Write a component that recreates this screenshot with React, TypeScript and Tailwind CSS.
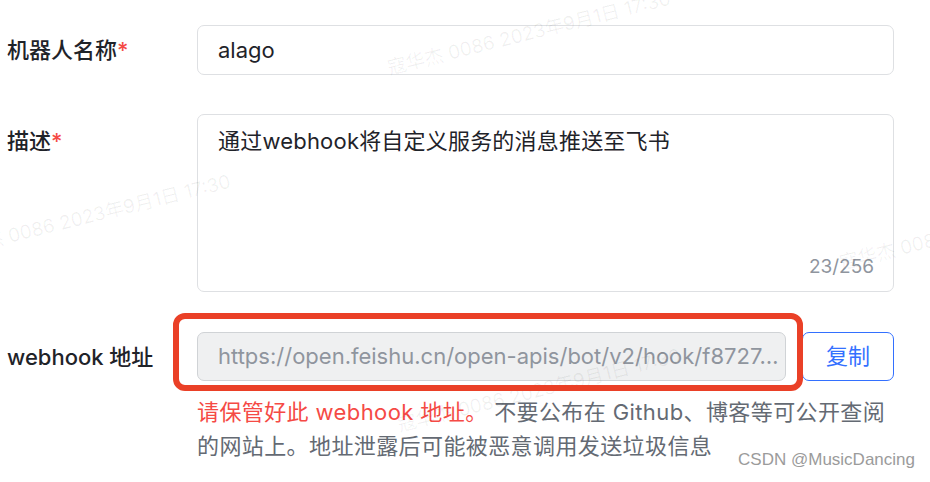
import React from "react";

const marks = [
  { left: 388, top: 55, text: "寇华杰 0086 2023年9月1日 17:30" },
  { left: -52, top: 238, text: "寇华杰 0086 2023年9月1日 17:30" },
  { left: 840, top: 250, text: "寇华杰 0086 2023年9月1日 17:30" },
  { left: 398, top: 412, text: "寇华杰 0086 2023年9月1日 17:30" },
];

function Label({ text, required }: { text: string; required?: boolean }) {
  return (
    <div className="w-[197px] shrink-0 pl-[7px] text-[22px] leading-[32px] font-medium text-[#1f2329]">
      {text}
      {required && <span className="text-[#f54a45]">*</span>}
    </div>
  );
}

export default function App() {
  return (
    <div
      className="relative w-[930px] h-[482px] overflow-hidden bg-white"
      style={{ fontFamily: 'Inter, "Noto Sans CJK SC", sans-serif' }}
    >
      <div className="flex flex-col pt-[25px]">
        {/* 机器人名称 */}
        <div className="flex items-center">
          <Label text="机器人名称" required />
          <div className="w-[697px] h-[50px] flex items-center px-[20px] border border-[#dee0e3] rounded-[7px] text-[22px] text-[#1f2329]">
            alago
          </div>
        </div>

        {/* 描述 */}
        <div className="flex items-start mt-[39px]">
          <div className="pt-[11px]">
            <Label text="描述" required />
          </div>
          <div className="relative w-[697px] h-[178px] border border-[#dee0e3] rounded-[7px] px-[20px] pt-[10px] text-[22px] leading-[32px] tracking-[0.2px] text-[#1f2329]">
            通过webhook将自定义服务的消息推送至飞书
            <span className="absolute right-[19px] bottom-[12px] text-[19px] leading-[24px] tracking-normal text-[#8f959e]">23/256</span>
          </div>
        </div>

        {/* webhook 地址 */}
        <div className="flex items-center mt-[40px]">
          <Label text="webhook 地址" />
          <div className="relative">
            <div className="absolute -left-[24px] -top-[19px] -right-[17px] -bottom-[10px] border-[6px] border-[#ea4027] rounded-[12px] z-10" />
            <div className="w-[589px] h-[49px] flex items-center px-[20px] bg-[#eff0f1] border border-[#d0d3d6] rounded-[7px] text-[22px] text-[#8f959e] whitespace-nowrap overflow-hidden">
              https://open.feishu.cn/open-apis/bot/v2/hook/f8727…
            </div>
          </div>
          <button className="ml-[16px] w-[92px] h-[49px] border border-[#3370ff] rounded-[7px] text-[22px] text-[#3370ff] bg-white">
            复制
          </button>
        </div>

        <div className="pl-[197px] mt-[14px] text-[22px] leading-[34px] tracking-[0.4px] text-[#646a73] whitespace-nowrap">
          <span className="text-[#f54a45]">请保管好此 webhook 地址。</span> 不要公布在 Github、博客等可公开查阅
          <br />
          的网站上。地址泄露后可能被恶意调用发送垃圾信息
        </div>
      </div>

      {/* watermark */}
      {marks.map((m, i) => (
        <div
          key={i}
          className="absolute whitespace-nowrap text-[19px] text-black/[0.06] origin-left -rotate-[14deg] pointer-events-none"
          style={{ left: m.left, top: m.top }}
        >
          {m.text}
        </div>
      ))}

      <div
        className="absolute right-[15px] bottom-[10px] text-[17px] text-[#9b9b9b]"
        style={{ fontFamily: '"Liberation Sans", sans-serif' }}
      >
        CSDN @MusicDancing
      </div>
    </div>
  );
}
